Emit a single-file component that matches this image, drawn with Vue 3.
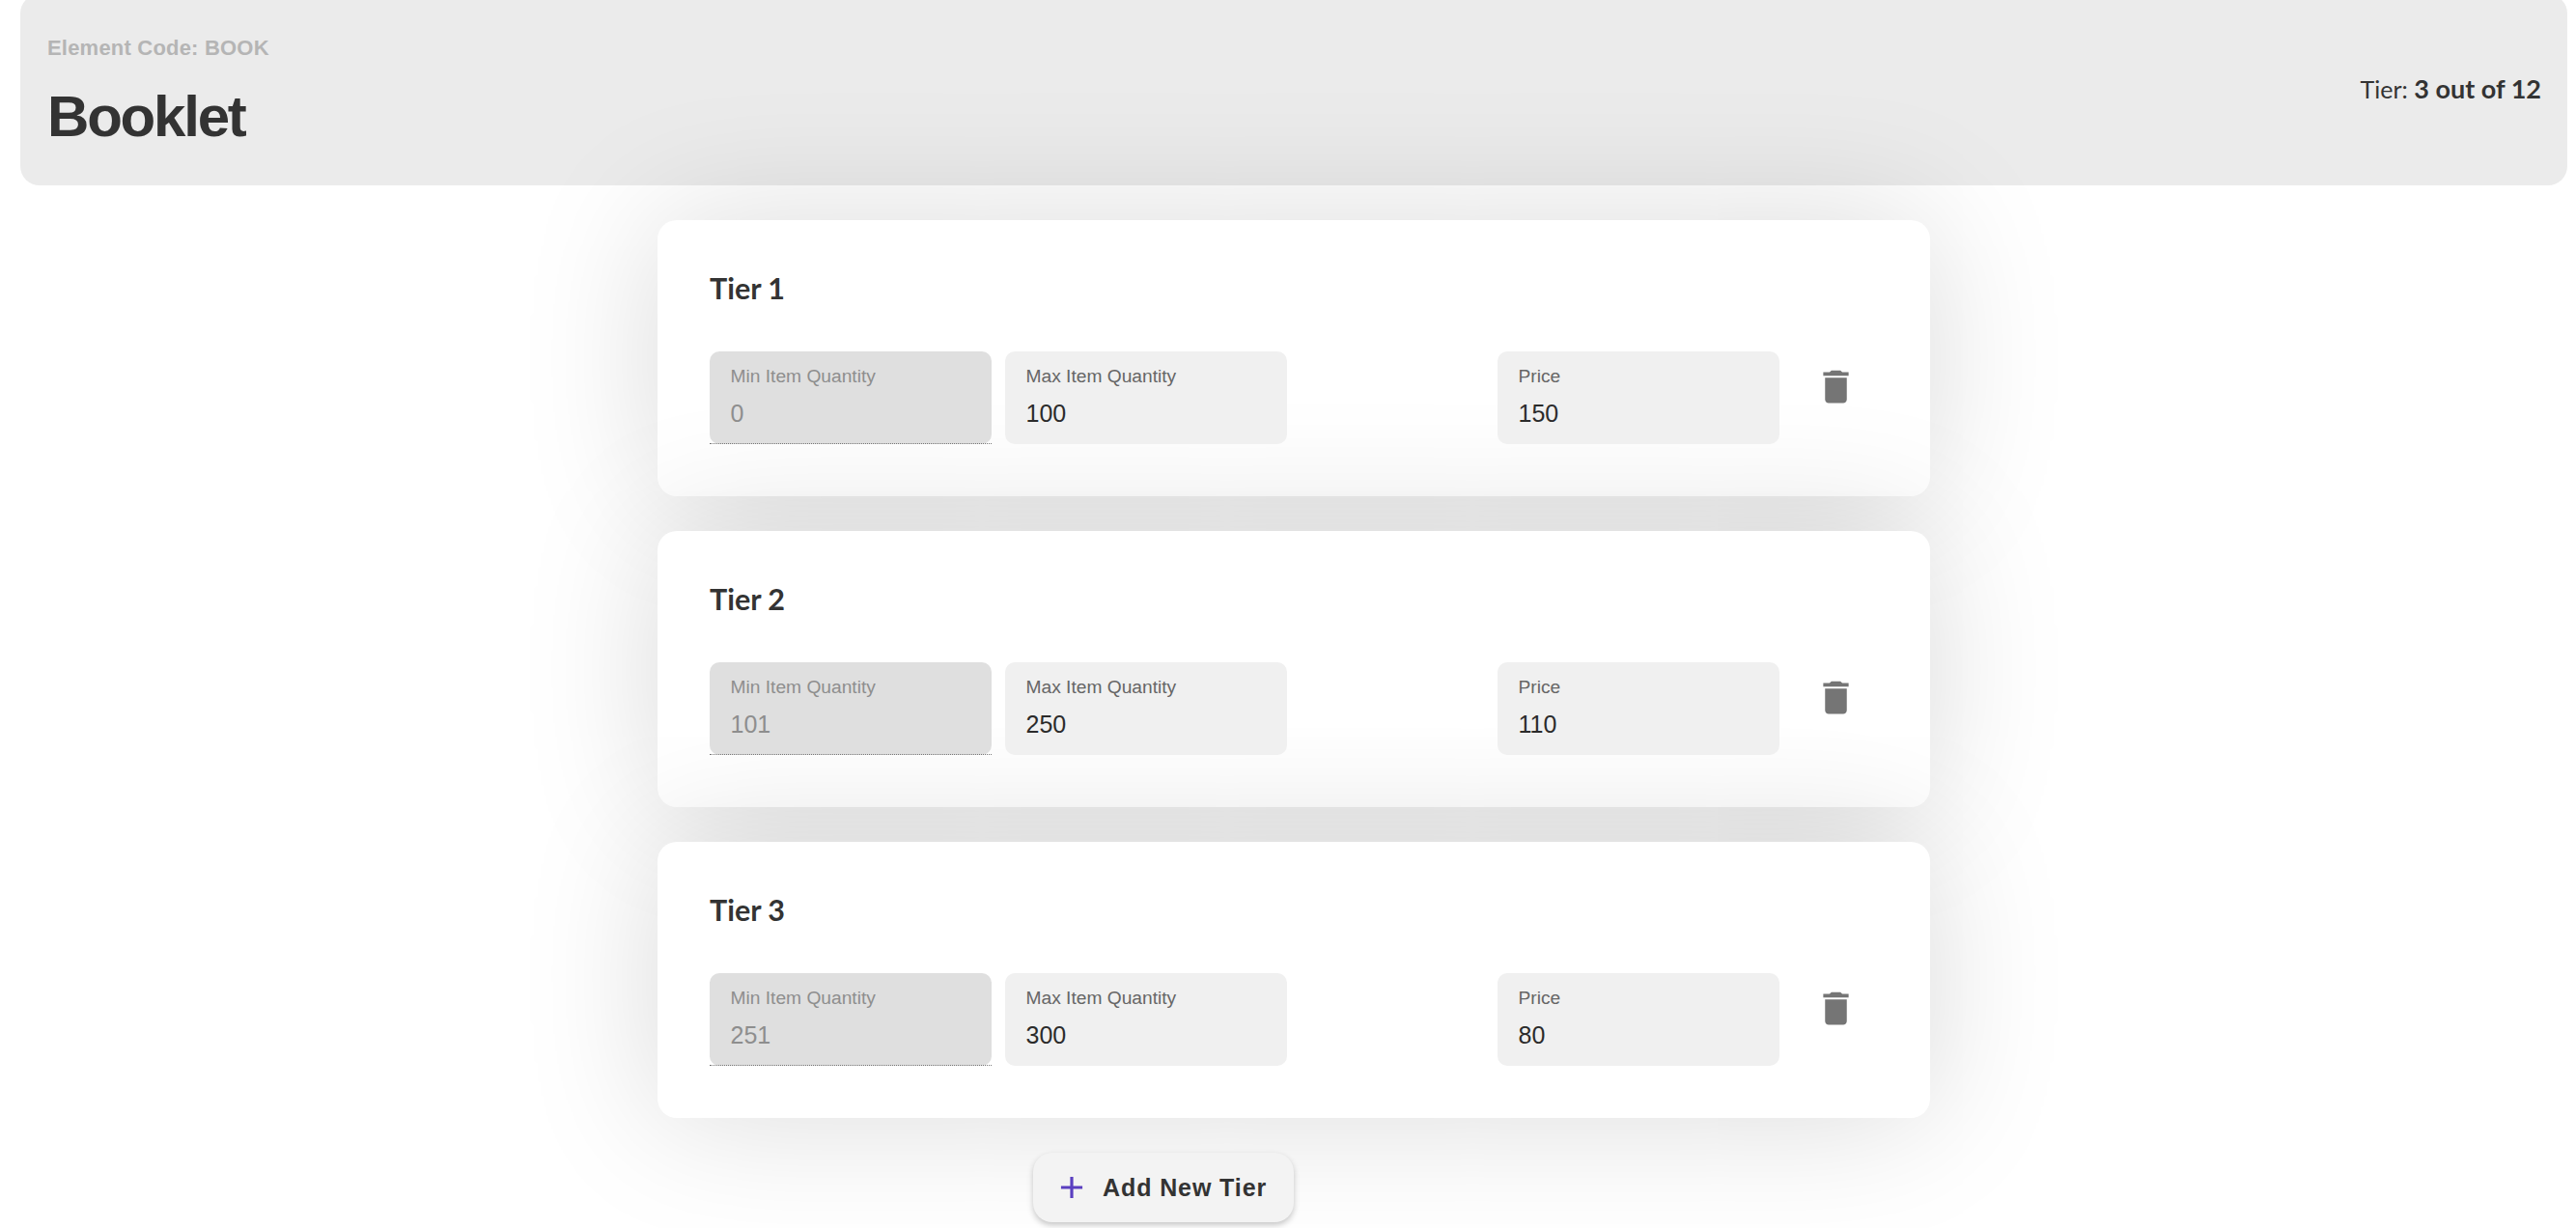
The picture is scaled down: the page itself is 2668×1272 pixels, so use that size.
<script setup>
import { ref } from 'vue'

let tiers = ref([
  { id: 1, min: '0', max: '100', price: '150' },
  { id: 2, min: '101', max: '250', price: '110' },
  { id: 3, min: '251', max: '300', price: '80' },
])
</script>

<template>
  <div class="page">
    <header class="head">
      <div class="info">
        <div class="code">Element Code: BOOK</div>
        <h1 class="name">Booklet</h1>
      </div>
      <div class="count">Tier: <b>3 out of 12</b></div>
    </header>

    <div class="tiers">
      <section v-for="tier in tiers" :key="tier.id" class="card">
        <h2 class="title">Tier {{ tier.id }}</h2>
        <div class="row">
          <div class="field disabled">
            <div class="label">Min Item Quantity</div>
            <div class="value">{{ tier.min }}</div>
          </div>
          <div class="field">
            <div class="label">Max Item Quantity</div>
            <div class="value">{{ tier.max }}</div>
          </div>
          <div class="spacer"></div>
          <div class="field">
            <div class="label">Price</div>
            <div class="value">{{ tier.price }}</div>
          </div>
          <svg class="trash" viewBox="0 0 24 24" aria-hidden="true">
            <path d="M6 19c0 1.1.9 2 2 2h8c1.1 0 2-.9 2-2V7H6v12zM19 4h-3.5l-1-1h-5l-1 1H5v2h14V4z" />
          </svg>
        </div>
      </section>

      <button class="add">
        <svg class="plus" viewBox="0 0 24 24" aria-hidden="true">
          <path d="M19 13h-6v6h-2v-6H5v-2h6V5h2v6h6v2z" />
        </svg>
        Add New Tier
      </button>
    </div>
  </div>
</template>

<style scoped>
.page {
  padding: 0 9px 0 21px;
  height: 1272px;
  box-sizing: border-box;
  overflow: hidden;
  font-family: "Liberation Sans", Arial, sans-serif;
  color: #333;
}

.head {
  display: flex;
  justify-content: space-between;
  align-items: center;
  margin-top: -6px;
  height: 198px;
  box-sizing: border-box;
  padding: 0 27px 0 28px;
  background: #ebebeb;
  border-radius: 20px;
}

.info {
  align-self: flex-start;
  padding-top: 43px;
}

.code {
  font-size: 22px;
  line-height: 26px;
  font-weight: 700;
  letter-spacing: 0.2px;
  color: #b5b5b5;
}

.name {
  margin: 25px 0 0;
  font-size: 60px;
  line-height: 66px;
  font-weight: 700;
  letter-spacing: -2.2px;
}

.count {
  font-family: Lato, "Noto Sans", sans-serif;
  font-size: 25px;
  margin-top: -3px;
}

.count b {
  font-size: 27px;
  font-weight: 700;
}

.tiers {
  width: 1318px;
  margin: 36px auto 0;
  display: flex;
  flex-direction: column;
  gap: 36px;
}

.card {
  height: 286px;
  box-sizing: border-box;
  padding: 50px 54px 0;
  background: #fff;
  border-radius: 20px;
  box-shadow: 0 0 140px rgba(0, 0, 0, 0.15);
}

.title {
  margin: 0;
  font-family: Lato, "Noto Sans", sans-serif;
  font-size: 30.5px;
  line-height: 40px;
  font-weight: 700;
}

.row {
  display: flex;
  align-items: flex-start;
  gap: 14px;
  margin-top: 46px;
}

.spacer {
  width: 190px;
}

.field {
  position: relative;
  width: 292px;
  height: 96px;
  box-sizing: border-box;
  padding: 14px 21.5px 0;
  background: #f0f0f0;
  border-radius: 10px;
}

.field.disabled {
  background: #dfdfdf;
}

.field.disabled::after {
  content: '';
  position: absolute;
  left: 0;
  right: 0;
  bottom: 0;
  border-bottom: 1px dotted #777;
}

.label {
  font-size: 19.2px;
  line-height: 24px;
  color: #666;
}

.value {
  margin-top: 10px;
  font-size: 25px;
  line-height: 32px;
  color: #2b2b2b;
}

.disabled .label,
.disabled .value {
  color: #8e8e8e;
}

.trash {
  width: 45px;
  height: 45px;
  margin: 14px 0 0 22px;
  fill: #757575;
}

.add {
  display: flex;
  align-items: center;
  gap: 13px;
  align-self: flex-start;
  margin-left: 389px;
  width: 270px;
  height: 72px;
  padding: 0 0 0 21px;
  border: 0;
  border-radius: 20px;
  background: #f3f3f3;
  box-shadow: 0 3px 6px rgba(0, 0, 0, 0.22);
  font-family: "Liberation Sans", Arial, sans-serif;
  font-size: 25px;
  font-weight: 700;
  letter-spacing: 0.9px;
  color: #333;
}

.plus {
  width: 38px;
  height: 38px;
  fill: #5a3fc0;
}
</style>
